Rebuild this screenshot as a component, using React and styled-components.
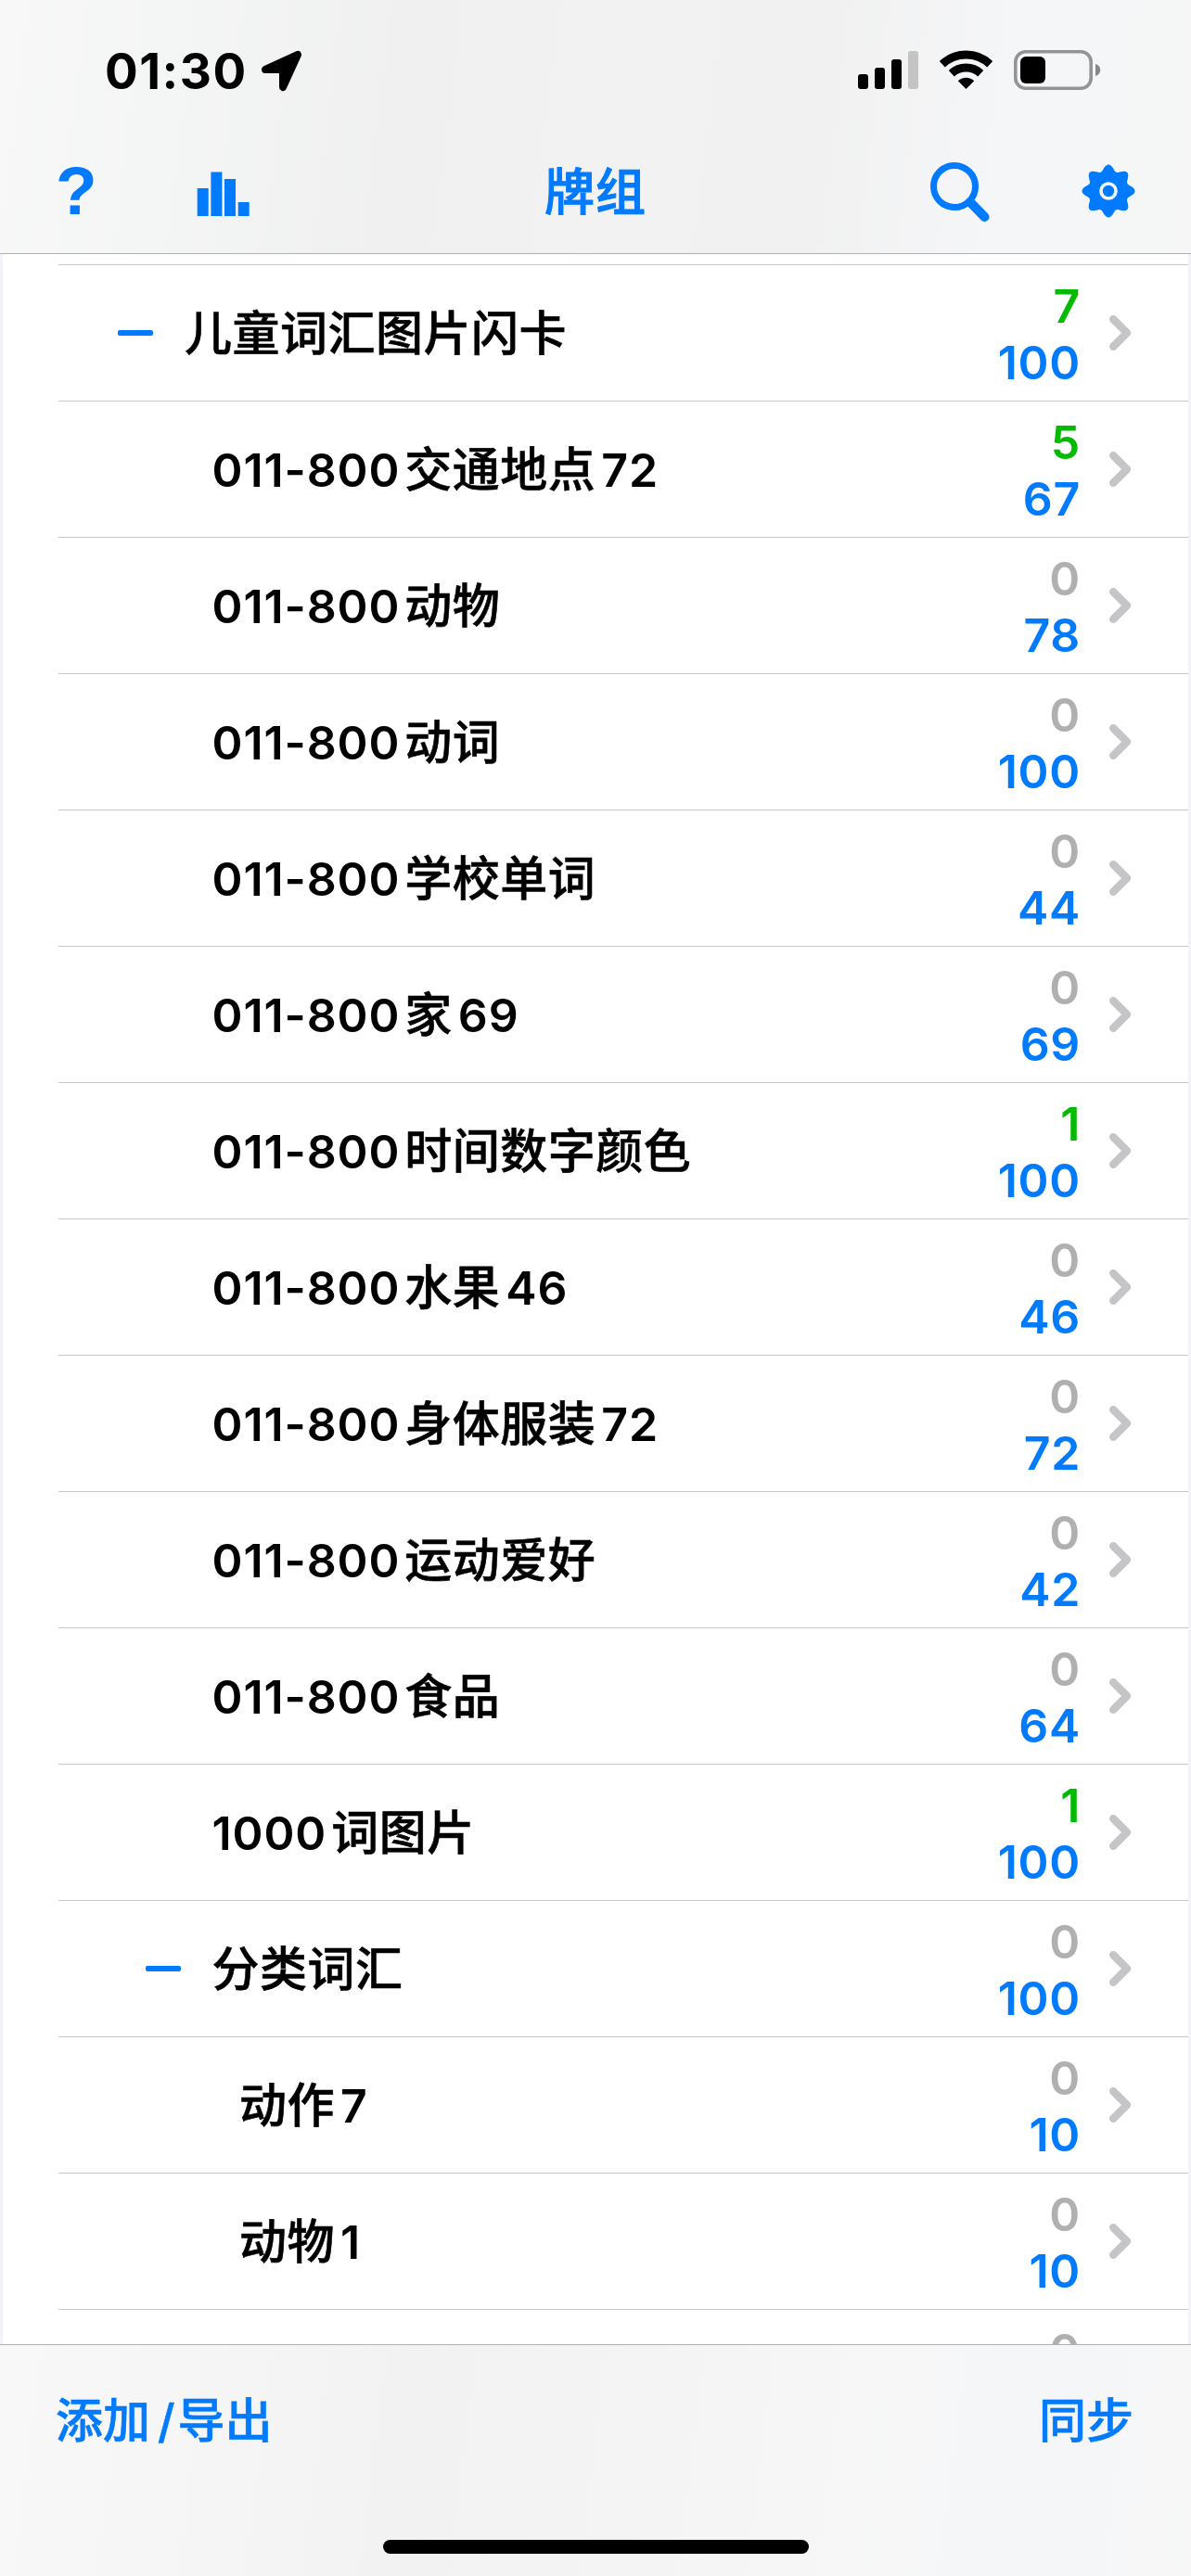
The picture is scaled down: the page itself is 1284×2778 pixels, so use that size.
import React from 'react'
import styled, { createGlobalStyle } from 'styled-components'

const colors = {
    blue: '#007aff',
    green: '#00bb00',
    gray: '#b0b0b0',
    separator: '#c6c6c8',
    barBorder: '#b0b0b2',
    grouped: '#f2f2f7',
}

const decks = [
    { name: '儿童词汇图片闪卡', level: 0, open: true, due: 7, fresh: 100 },
    { name: '011-800交通地点72', level: 1, due: 5, fresh: 67 },
    { name: '011-800动物', level: 1, due: 0, fresh: 78 },
    { name: '011-800动词', level: 1, due: 0, fresh: 100 },
    { name: '011-800学校单词', level: 1, due: 0, fresh: 44 },
    { name: '011-800家69', level: 1, due: 0, fresh: 69 },
    { name: '011-800时间数字颜色', level: 1, due: 1, fresh: 100 },
    { name: '011-800水果46', level: 1, due: 0, fresh: 46 },
    { name: '011-800身体服装72', level: 1, due: 0, fresh: 72 },
    { name: '011-800运动爱好', level: 1, due: 0, fresh: 42 },
    { name: '011-800食品', level: 1, due: 0, fresh: 64 },
    { name: '1000词图片', level: 1, due: 1, fresh: 100 },
    { name: '分类词汇', level: 1, open: true, due: 0, fresh: 100 },
    { name: '动作7', level: 2, due: 0, fresh: 10 },
    { name: '动物1', level: 2, due: 0, fresh: 10 },
    { name: '', level: 2, due: 0 },
]

// eight rounded teeth around the hub
const gearPath = () => {
    const points = []
    for (let i = 0; i < 144; i++) {
        const a = (i / 144) * Math.PI * 2
        const r = 25.2 + 3.3 * Math.cos(a * 8)
        points.push(`${(30 + r * Math.cos(a)).toFixed(2)} ${(30 + r * Math.sin(a)).toFixed(2)}`)
    }
    return `M${points.join('L')}Z`
}

// digits and ideographs are set in different fonts
const DeckName = ({ name }) => (
    <Name>
        {(name.match(/[\x20-\x7e]+|[^\x20-\x7e]+/g) || []).map((run, i) =>
            /[\x20-\x7e]/.test(run) ? (
                <Latin key={i} $spaced={i > 0}>
                    {run}
                </Latin>
            ) : (
                <Han key={i} $spaced={i > 0}>
                    {run}
                </Han>
            )
        )}
    </Name>
)

const DeckRow = ({ deck }) => (
    <Row $level={deck.level}>
        <Toggle>{deck.open && <Minus />}</Toggle>
        <DeckName name={deck.name} />
        <Counts>
            <Count $color={deck.due ? colors.green : colors.gray}>{deck.due}</Count>
            <Count $color={colors.blue}>{deck.fresh}</Count>
        </Counts>
        <Chevron width="24" height="38" viewBox="0 0 24 38">
            <path d="M4.2 4.2L19 19L4.2 33.8" />
        </Chevron>
    </Row>
)

const StatusBar = () => (
    <Status>
        <Time>01:30</Time>
        <LocationIcon width="46" height="46" viewBox="0 0 46 46">
            <path d="M5 21L40 5L24 40V21Z" />
        </LocationIcon>
        <StatusIcons width="266" height="46" viewBox="0 0 266 46">
            <rect x="3" y="27" width="11" height="16" rx="3" />
            <rect x="21" y="20" width="11" height="23" rx="3" />
            <rect x="39" y="11" width="11" height="32" rx="3" />
            <rect x="57" y="2" width="11" height="41" rx="3" fill="#c4c4c4" />
            <g fill="none" stroke="#000" strokeWidth="8.8">
                <path d="M93.8 16.200a37.500 37.500 0 0 1 51.400 0" />
                <path d="M103.800 26.200a23 23 0 0 1 31.400 0" />
            </g>
            <path d="M119.500 43L110.800 34.200a12.500 12.500 0 0 1 17.400 0Z" />
            <rect x="172.800" y="2.800" width="81.400" height="39.400" rx="11" fill="none" stroke="#949496" strokeWidth="3.600" />
            <rect x="178" y="8" width="27" height="29" rx="6" />
            <path d="M259 16c7 2 7 11 0 13Z" fill="#878787" />
        </StatusIcons>
    </Status>
)

const NavBar = () => (
    <Nav>
        <Help>?</Help>
        <StatsIcon width="58" height="50" viewBox="0 0 58 50">
            <rect x="0.700" y="20" width="12" height="30" />
            <rect x="15.400" y="2.500" width="12" height="47.500" />
            <rect x="30" y="10" width="12" height="40" />
            <rect x="44.700" y="35" width="12" height="15" />
        </StatsIcon>
        <Title>牌组</Title>
        <SearchIcon width="66" height="66" viewBox="0 0 66 66">
            <circle cx="27" cy="27" r="22.500" strokeWidth="7" />
            <path d="M44 44L59.500 60" strokeWidth="10" strokeLinecap="round" />
        </SearchIcon>
        <GearIcon width="60" height="60" viewBox="0 0 60 60">
            <path d={gearPath()} fill={colors.blue} />
            <circle cx="30" cy="30" r="8" fill="none" stroke="#f5f6f7" strokeWidth="3.600" />
        </GearIcon>
    </Nav>
)

const App = () => (
    <Screen>
        <GlobalStyle />
        <Header>
            <StatusBar />
            <NavBar />
        </Header>
        <DeckList>
            {decks.map((deck, i) => (
                <DeckRow key={i} deck={deck} />
            ))}
        </DeckList>
        <Footer>
            <Actions>
                <Action>
                    添加<Slash>/</Slash>导出
                </Action>
                <Action>同步</Action>
            </Actions>
            <HomeIndicator />
        </Footer>
    </Screen>
)

const GlobalStyle = createGlobalStyle`
    body {
        margin: 0;
        background: #fff;
    }
    * {
        box-sizing: border-box;
    }
    svg {
        display: block;
        flex: none;
    }
`

const Screen = styled.div`
    display: flex;
    flex-direction: column;
    width: 1284px;
    height: 2778px;
    overflow: hidden;
    font-family: Inter, 'Noto Sans CJK SC', sans-serif;
`

const Header = styled.header`
    flex: none;
    height: 274px;
    border-bottom: 1px solid ${colors.barBorder};
    background: linear-gradient(97deg, #f8f8f8 0%, #f4f5f5 14%, #f0f0f0 34%, #f2f2f2 50%, #f1f1f1 68%, #f5f6f8 84%, #f6f6f6 100%);
`

const Status = styled.div`
    display: flex;
    height: 150px;
    padding: 53px 0 0 113px;
`

const Time = styled.div`
    width: 168px;
    height: 48px;
    font-size: 53px;
    font-weight: 720;
    letter-spacing: 1.5px;
    line-height: 48px;
    white-space: nowrap;
`

const LocationIcon = styled.svg`
    margin-top: 1px;
    fill: #000;
    stroke: #000;
    stroke-width: 8;
    stroke-linejoin: round;
`

const StatusIcons = styled.svg`
    margin-left: 595px;
`

const Nav = styled.nav`
    display: flex;
    align-items: flex-start;
    height: 123px;
    padding-left: 60px;
    color: ${colors.blue};
`

const Help = styled.div`
    width: 152px;
    margin-top: 16px;
    font: bold 73px/80px 'Liberation Sans', sans-serif;
`

const StatsIcon = styled.svg`
    margin-top: 33px;
    fill: ${colors.blue};
`

const Title = styled.h1`
    width: 180px;
    margin: 14px 0 0 282px;
    font-family: 'Noto Sans CJK SC', sans-serif;
    font-size: 54px;
    font-weight: 500;
    letter-spacing: 1px;
    line-height: 80px;
    text-align: center;
    -webkit-text-stroke: 1px currentColor;
`

const SearchIcon = styled.svg`
    margin: 24px 0 0 270px;
    fill: none;
    stroke: ${colors.blue};
`

const GearIcon = styled.svg`
    margin: 26px 0 0 97px;
`

const DeckList = styled.main`
    flex: none;
    height: 2254px;
    padding-top: 11px;
    border: solid ${colors.grouped};
    border-width: 0 3px;
    overflow: hidden;
`

const Row = styled.div`
    display: flex;
    height: 147px;
    margin-left: 60px;
    padding-left: ${({ $level }) => 64 + $level * 29.500}px;
    border-top: 1px solid ${colors.separator};
`

const Toggle = styled.div`
    width: 72px;
    padding-top: 70px;
`

const Minus = styled.div`
    width: 38px;
    height: 6px;
    border-radius: 2px;
    background: ${colors.blue};
`

const Name = styled.div`
    flex: 1;
    height: 146px;
    font-size: 51px;
    line-height: 141px;
    white-space: nowrap;
`

const Latin = styled.span`
    margin-left: ${({ $spaced }) => ($spaced ? 6 : 0)}px;
    font-family: Inter, sans-serif;
    font-size: 50px;
    font-weight: 580;
    letter-spacing: 0.9px;
`

const Han = styled.span`
    margin-left: ${({ $spaced }) => ($spaced ? 5 : 0)}px;
    font-family: 'Noto Sans CJK SC', sans-serif;
    font-weight: 500;
    letter-spacing: 0.5px;
    -webkit-text-stroke: 0.6px currentColor;
`

const Counts = styled.div`
    padding-top: 14px;
    text-align: right;
`

const Count = styled.div`
    height: 61px;
    margin-right: -1px;
    color: ${({ $color }) => $color};
    font-size: 50px;
    font-weight: 580;
    letter-spacing: 0.7px;
    line-height: 61px;
`

const Chevron = styled.svg`
    margin: 54px 61px 0 32px;
    fill: none;
    stroke: #c5c5c8;
    stroke-width: 8.400;
    stroke-linecap: round;
    stroke-linejoin: round;
`

const Footer = styled.footer`
    display: flex;
    flex-direction: column;
    align-items: center;
    flex: none;
    height: 250px;
    border-top: 1px solid ${colors.barBorder};
    background: linear-gradient(97deg, #f8f8f8 0%, #f5f5f5 20%, #f2f2f2 34%, #f4f4f4 55%, #f7f7f7 72%, #f4f6f8 86%, #f7f7f7 100%);
`

const Actions = styled.div`
    display: flex;
    justify-content: space-between;
    width: 100%;
    height: 210px;
    padding: 38px 62px 0 60px;
`

const Action = styled.div`
    color: ${colors.blue};
    font-family: 'Noto Sans CJK SC', sans-serif;
    font-size: 51px;
    font-weight: 500;
    line-height: 80px;
    -webkit-text-stroke: 0.6px currentColor;
`

const Slash = styled.span`
    margin: 0 3px 0 8px;
    font-family: Inter, sans-serif;
    font-size: 50px;
`

const HomeIndicator = styled.div`
    width: 459px;
    height: 15px;
    border-radius: 8px;
    background: #000;
`

export default App
